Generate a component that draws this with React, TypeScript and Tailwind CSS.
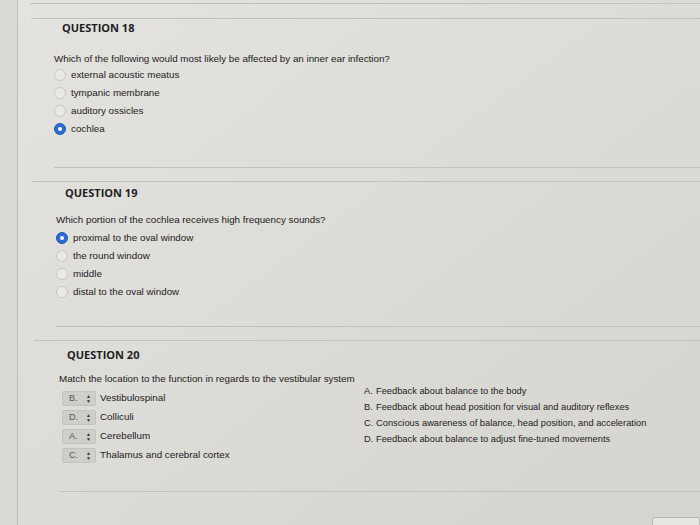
import * as React from "react";

type Choice = { text: string; checked?: boolean };

function Radio({ checked }: { checked?: boolean }) {
    if (checked) {
        return (
            <span className="flex items-center justify-center w-[12px] h-[12px] rounded-full bg-[#2d6bd2] border border-[#2459b4] shrink-0">
                <span className="w-[4px] h-[4px] rounded-full bg-white"/>
            </span>
        );
    }
    return <span className="w-[12px] h-[12px] rounded-full bg-[#eae9e5] border border-[#c8c6c1] shrink-0"/>;
}

function Choices({ items }: { items: Choice[] }) {
    return (
        <ul className="flex flex-col">
            {items.map((c) => (
                <li key={c.text} className="flex items-center gap-[5px] h-[18px]">
                    <Radio checked={c.checked}/>
                    <span>{c.text}</span>
                </li>
            ))}
        </ul>
    );
}

function Select({ letter }: { letter: string }) {
    return (
        <span className="flex items-center w-[34px] h-[15px] rounded-[2px] bg-[#d0cec9] border border-[#c4c2bd] text-[9px] text-[#555] shrink-0">
            <span className="flex-1 pl-[6px]">{letter}</span>
            <span className="flex flex-col items-center pr-[4px] text-[5px] leading-[5px] text-[#333]">
                <span>▲</span>
                <span>▼</span>
            </span>
        </span>
    );
}

const matches = [
    { letter: "B.", text: "Vestibulospinal" },
    { letter: "D.", text: "Colliculi" },
    { letter: "A.", text: "Cerebellum" },
    { letter: "C.", text: "Thalamus and cerebral cortex" },
];

const answers = [
    { key: "A.", text: "Feedback about balance to the body" },
    { key: "B.", text: "Feedback about head position for visual and auditory reflexes" },
    { key: "C.", text: "Conscious awareness of balance, head position, and acceleration" },
    { key: "D.", text: "Feedback about balance to adjust fine-tuned movements" },
];

export default function App() {
    return (
        <div className="flex w-[700px] h-[525px] overflow-hidden bg-linear-to-br from-[#e4e3df] to-[#d6d4cf] text-[#222] font-['Liberation_Sans',Arial,sans-serif] text-[9.8px]">
            <div className="w-[18px] shrink-0 bg-[#dbd9d4] border-r border-[#bcbab5]"/>

            <main className="flex-1 flex flex-col">
                <div className="mt-[3px] ml-[12px] border-t border-[#c3c1bc]"/>

                {/* question 18 */}
                <section className="mt-[14px] ml-[13px] border-t border-[#c3c1bc]">
                    <h2 className="h-[18px] flex items-center pl-[31px] font-['Open_Sans',sans-serif] font-bold text-[11px] text-[#1e1e1e]">
                        QUESTION 18
                    </h2>
                    <div className="pl-[23px]">
                        <p className="mt-[15px] h-[14px] flex items-center">
                            Which of the following would most likely be affected by an inner ear infection?
                        </p>
                        <Choices
                            items={[
                                { text: "external acoustic meatus" },
                                { text: "tympanic membrane" },
                                { text: "auditory ossicles" },
                                { text: "cochlea", checked: true },
                            ]}
                        />
                        <div className="mt-[29px] border-t border-[#c3c1bc]"/>
                    </div>
                </section>

                {/* question 19 */}
                <section className="mt-[13px] ml-[14px] border-t border-[#c3c1bc]">
                    <h2 className="mt-[2px] h-[18px] flex items-center pl-[33px] font-['Open_Sans',sans-serif] font-bold text-[11px] text-[#1e1e1e]">
                        QUESTION 19
                    </h2>
                    <div className="pl-[24px]">
                        <p className="mt-[11px] h-[14px] flex items-center">
                            Which portion of the cochlea receives high frequency sounds?
                        </p>
                        <div className="mt-[2px]">
                            <Choices
                                items={[
                                    { text: "proximal to the oval window", checked: true },
                                    { text: "the round window" },
                                    { text: "middle" },
                                    { text: "distal to the oval window" },
                                ]}
                            />
                        </div>
                        <div className="mt-[25px] border-t border-[#c3c1bc]"/>
                    </div>
                </section>

                {/* question 20 */}
                <section className="mt-[13px] ml-[16px] border-t border-[#c3c1bc]">
                    <h2 className="mt-[5px] h-[18px] flex items-center pl-[33px] font-['Open_Sans',sans-serif] font-bold text-[11px] text-[#1e1e1e]">
                        QUESTION 20
                    </h2>
                    <div className="pl-[25px]">
                        <p className="mt-[8px] h-[14px] flex items-center">
                            Match the location to the function in regards to the vestibular system
                        </p>
                        <div className="flex">
                            <ul className="mt-[3px] pl-[3px] w-[305px] flex flex-col">
                                {matches.map((m) => (
                                    <li key={m.text} className="h-[19px] flex items-center gap-[4px]">
                                        <Select letter={m.letter}/>
                                        <span>{m.text}</span>
                                    </li>
                                ))}
                            </ul>
                            <ul className="-mt-[2px] flex flex-col text-[9.3px]">
                                {answers.map((a) => (
                                    <li key={a.key} className="h-[16px] flex items-center gap-[2px]">
                                        <span className="w-[10px]">{a.key}</span>
                                        <span>{a.text}</span>
                                    </li>
                                ))}
                            </ul>
                        </div>
                        <div className="mt-[26px] border-t border-[#c3c1bc]"/>
                        <div className="mt-[25px] flex justify-end">
                            <span className="w-[48px] h-[12px] rounded-[2px] border border-[#b9b7b2] bg-[#e6e5e1]"/>
                        </div>
                    </div>
                </section>
            </main>
        </div>
    );
}
